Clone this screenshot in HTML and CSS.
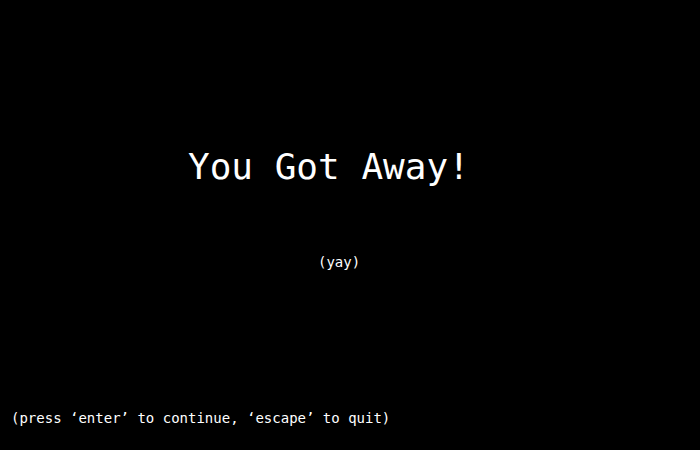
FILE: index.html
```html
<!DOCTYPE html>
<html>
<head>
<meta charset="utf-8">
<link rel="stylesheet" href="styles.css">
</head>
<body>
<div class="screen">
  <div class="main">
    <h1 class="title">You Got Away!</h1>
    <p class="sub">(yay)</p>
  </div>
  <p class="hint">(press ‘enter’ to continue, ‘escape’ to quit)</p>
</div>
</body>
</html>
```
FILE: styles.css
```css
html, body {
  margin: 0;
  padding: 0;
  background: #000;
}
.screen {
  width: 700px;
  height: 450px;
  display: flex;
  flex-direction: column;
  color: #fff;
  font-family: "DejaVu Sans Mono", monospace;
}
.main {
  flex: 1;
  display: flex;
  flex-direction: column;
  padding-top: 145px;
}
.title {
  margin: 0 0 0 188px;
  font-size: 36px;
  font-weight: normal;
  line-height: 44px;
}
.sub {
  margin: 65px 0 0 318px;
  font-size: 14px;
  line-height: 16px;
}
.hint {
  margin: 0 0 23px 11px;
  font-size: 14px;
  line-height: 18px;
}
```
